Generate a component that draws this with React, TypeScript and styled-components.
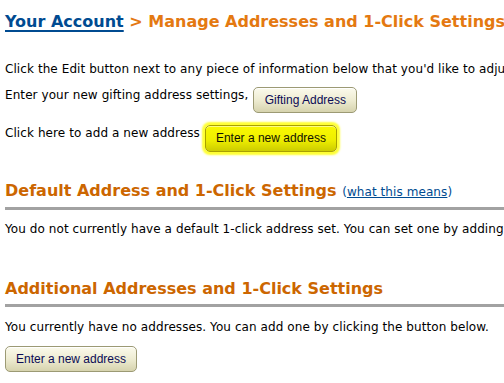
import styled, { createGlobalStyle } from 'styled-components'

const GlobalStyle = createGlobalStyle`
    html, body {
        margin: 0;
        padding: 0;
        background: #ffffff;
        overflow: hidden;
    }
    body {
        font-family: "DejaVu Sans", Verdana, sans-serif;
        font-size: 12px;
        letter-spacing: 0.08px;
        color: #000000;
    }
`

const Page = styled.div`
    width: 900px;
    padding: 12px 0 0 5px;
    white-space: nowrap;
`

const Title = styled.h1`
    margin: 0 0 29px;
    font-size: 16px;
    line-height: 20px;
    font-weight: bold;
    letter-spacing: 0;
    color: #e47911;
`

const TitleLink = styled.a`
    color: #004b91;
    text-decoration: underline;
    text-decoration-thickness: 2px;
    text-underline-offset: 3px;
`

const Line = styled.p<{ $after?: number }>`
    margin: 0 0 ${p => p.$after ?? 0}px;
    line-height: 16px;
`

const Row = styled.div<{ $after?: number }>`
    display: flex;
    align-items: flex-start;
    gap: 5px;
    margin-bottom: ${p => p.$after ?? 0}px;
    line-height: 16px;
`

const Button = styled.button<{ $width: number, $highlight?: boolean }>`
    box-sizing: border-box;
    width: ${p => p.$width}px;
    height: ${p => p.$highlight ? 27 : 26}px;
    padding: 0 0 1px;
    font-family: "Liberation Sans", Arial, sans-serif;
    font-size: 12px;
    letter-spacing: 0;
    color: ${p => p.$highlight ? '#111100' : '#0b0b55'};
    border: 1px solid ${p => p.$highlight ? '#a8a000' : '#9c9a74'};
    border-radius: 5px;
    background: ${p => p.$highlight
        ? 'linear-gradient(#f9f900 0%, #efef00 55%, #cccc00 100%)'
        : 'linear-gradient(#fbfaec 0%, #eeecd2 50%, #d6d3ae 100%)'};
    box-shadow: ${p => p.$highlight
        ? '0 0 2px 3px #ffff33, inset 0 1px 0 #fdfd80'
        : 'inset 0 1px 0 #ffffff'};
    cursor: pointer;
`

const SectionHeading = styled.h2`
    margin: 0;
    padding-bottom: 5px;
    border-bottom: 3px solid #a2a2a2;
    font-size: 16px;
    line-height: 20px;
    font-weight: bold;
    letter-spacing: 0;
    color: #cc6600;
`

const Note = styled.span`
    font-size: 12px;
    font-weight: normal;
    letter-spacing: 0.08px;
    color: #004b91;

    a {
        color: #004b91;
        text-decoration: underline;
    }
`

const Section = styled.div<{ $after?: number }>`
    margin-bottom: ${p => p.$after ?? 0}px;
`

const SectionBody = styled.div<{ $top: number }>`
    padding-top: ${p => p.$top}px;
`

export default function App() {
    return <>
        <GlobalStyle />
        <Page>
            <Title>
                <TitleLink href="#">Your Account</TitleLink> &gt; Manage Addresses and 1-Click Settings
            </Title>
            <Line $after={10}>
                Click the Edit button next to any piece of information below that you'd like to adjust.
            </Line>
            <Row $after={12}>
                <span>Enter your new gifting address settings,</span>
                <Button $width={104}>Gifting Address</Button>
            </Row>
            <Row $after={29}>
                <span>Click here to add a new address</span>
                <Button $width={132} $highlight>Enter a new address</Button>
            </Row>

            <Section $after={42}>
                <SectionHeading>
                    Default Address and 1-Click Settings <Note>(<a href="#">what this means</a>)</Note>
                </SectionHeading>
                <SectionBody $top={11}>
                    <Line>
                        You do not currently have a default 1-click address set. You can set one by adding an address below.
                    </Line>
                </SectionBody>
            </Section>

            <Section>
                <SectionHeading>Additional Addresses and 1-Click Settings</SectionHeading>
                <SectionBody $top={12}>
                    <Line $after={11}>
                        You currently have no addresses. You can add one by clicking the button below.
                    </Line>
                    <Button $width={132}>Enter a new address</Button>
                </SectionBody>
            </Section>
        </Page>
    </>
}
